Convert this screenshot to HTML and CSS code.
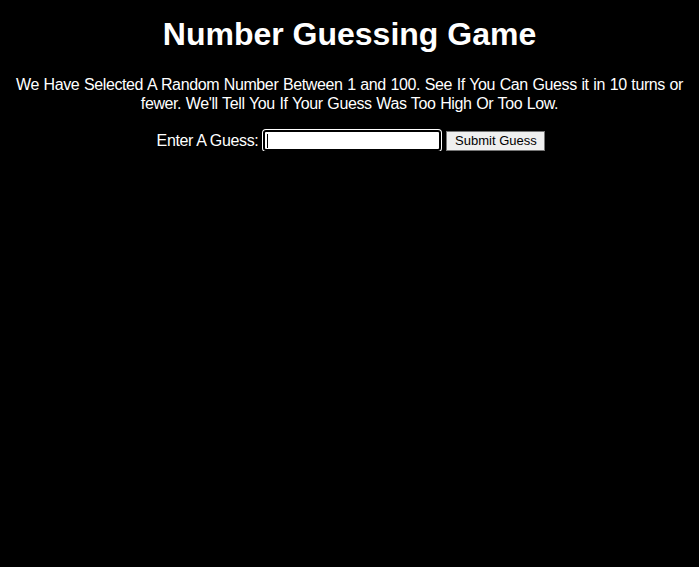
FILE: index.html
```html
<!DOCTYPE html>
<html>
<head>
<meta charset="utf-8">
<title>Number Guessing Game</title>
<link rel="stylesheet" href="styles.css">
</head>
<body>
<h1 class="title">Number Guessing Game</h1>
<p class="intro">We Have Selected A Random Number Between 1 and 100. See If You Can Guess it in 10 turns or fewer. We'll Tell You If Your Guess Was Too High Or Too Low.</p>
<form class="guess-form" onsubmit="return false">
  <label class="guess-label" for="guessField">Enter A Guess:</label>
  <span class="guess-field" id="guessField"><span class="caret"></span></span>
  <button class="guess-submit" type="button">Submit Guess</button>
</form>
</body>
</html>
```
FILE: styles.css
```css
html, body {
  background: #000;
}
body {
  margin: 0;
  padding: 0 8px;
  color: #fff;
  font-family: "Liberation Sans", Arial, sans-serif;
  text-align: center;
}
.title {
  margin: 16px 0 0;
  font-size: 32px;
  font-weight: bold;
  line-height: 37px;
}
.intro {
  margin: 22px 0 0;
  font-size: 16px;
  line-height: 19px;
  letter-spacing: -0.39px;
  word-spacing: 0.6px;
}
.guess-form {
  margin-top: 17px;
  display: flex;
  justify-content: center;
  align-items: center;
  gap: 0;
}
.guess-label {
  font-size: 16px;
  letter-spacing: -0.35px;
  margin-right: 5px;
  margin-left: 3px;
}
.guess-field {
  box-sizing: border-box;
  width: 178px;
  height: 21px;
  background: #fff;
  border: 2px solid #000;
  border-radius: 3px;
  box-shadow: 0 0 0 1px #fff;
  display: flex;
  align-items: center;
  padding-left: 2px;
}
.caret {
  width: 1px;
  height: 14px;
  background: #000;
}
.guess-submit {
  box-sizing: border-box;
  margin-left: 5px;
  width: 99px;
  height: 20px;
  padding: 0;
  background: #efefef;
  color: #000;
  border: 1px solid #767676;
  border-radius: 0;
  font-family: "Liberation Sans", Arial, sans-serif;
  font-size: 13px;
}
```
